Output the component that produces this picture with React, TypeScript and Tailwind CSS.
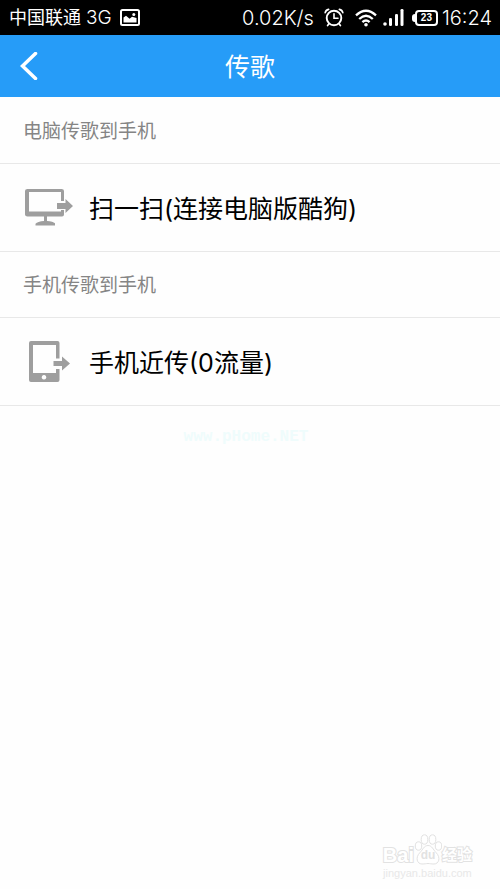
import type { ReactNode } from 'react';

const StatusBar = () => (
  <div className="flex h-[35px] items-center justify-between bg-black pl-[9px] pr-2 text-lg text-white">
    <div className="flex items-center gap-2">
      <span>
        中国联通 <span className="text-[19px] font-light">3G</span>
      </span>
      <svg viewBox="0 0 20 17" className="h-[17px] w-5" fill="none">
        <rect x="1" y="1" width="18" height="15" rx="1.5" stroke="#fff" strokeWidth="2" />
        <path d="M3.5 13.5V8.5L6 6.8l3.600 3 2.400-2L16.500 9v4.500z" fill="#fff" />
        <circle cx="13.8" cy="5.4" r="1.5" fill="#fff" />
      </svg>
    </div>
    <div className="flex items-center">
      <span className="text-xl font-light">0.02K/s</span>
      <svg viewBox="0 0 20 19" className="ml-[10px] h-[19px] w-5" fill="none" stroke="#fff" strokeLinecap="round">
        <circle cx="10" cy="10" r="7.3" strokeWidth="1.9" />
        <path d="M10 5.8V10.3H14" strokeWidth="1.6" />
        <path d="M1.2 4.6Q1.8 2 4.6 1.4M18.8 4.6Q18.2 2 15.4 1.4M4.8 16l-1.2 1.6M15.2 16l1.2 1.6" strokeWidth="1.7" />
      </svg>
      <svg viewBox="0 0 22 18" className="ml-[11px] h-[18px] w-[22px]" fill="none" stroke="#fff" strokeWidth="2.3">
        <path d="M1 6.4Q11-2.8 21 6.4" />
        <path d="M4.2 10Q11 3.6 17.8 10" />
        <path d="M7.4 13.2Q11 9.8 14.6 13.2" />
        <circle cx="11" cy="15.8" r="1.8" fill="#fff" stroke="none" />
      </svg>
      <svg viewBox="0 0 21 17" className="ml-[6px] h-[17px] w-[21px]" fill="#fff">
        <circle cx="2" cy="15" r="1.8" />
        <rect x="6" y="9" width="3" height="8" rx="1.3" />
        <rect x="12" y="5" width="3" height="12" rx="1.3" />
        <rect x="17.5" y="0" width="3" height="17" rx="1.3" />
      </svg>
      <div className="ml-2 flex items-center">
        <div className="h-2 w-[3px] rounded-l-sm bg-white" />
        <div className="flex h-4 w-[23px] items-center justify-center rounded-[4px] border-2 border-white font-['Liberation_Sans'] text-[10px] leading-none font-bold">
          23
        </div>
      </div>
      <span className="ml-1 text-xl font-light">16:24</span>
    </div>
  </div>
);

const ComputerIcon = () => (
  <svg viewBox="0 0 50 40" className="h-10 w-[50px]" fill="#9e9e9e">
    <path d="M3.5 1h34Q40 1 40 3V13h-3V4H5v19.500h32V22h3v4.500q0 2-2 2H23v4.500q6 .5 8 2.200V37.500H11.500v-1.800q2-2.200 8.500-2.700V28.500H3.500Q1 28.500 1 26.500V3Q1 1 3.500 1z" />
    <path d="M33 15h8.500V11l7.500 7-7.500 7v-4h-8.500z" />
  </svg>
);

const PhoneIcon = () => (
  <svg viewBox="0 0 50 42" className="h-[42px] w-[50px]" fill="#9e9e9e">
    <path
      fillRule="evenodd"
      d="M7 0h26.500q2 0 2 2v15.500h-3.500V4H9v28h23v-4h3.500v11q0 2-2 2H7q-2 0-2-2V2q0-2 2-2zM20 34a2.300 2.300 0 1 0 .01 0z"
    />
    <path d="M29.500 20h8.500v-4.500l8 7-8 7V25h-8.500z" />
  </svg>
);

const SectionTitle = ({ children }: { children: ReactNode }) => (
  <h2 className="flex h-[66px] items-center border-b border-[#e8e8e8] px-[23px] pt-1 text-[19px] text-[#858585]">
    {children}
  </h2>
);

const MenuItem = ({ icon, label }: { icon: ReactNode; label: string }) => (
  <button
    type="button"
    className="flex h-[88px] w-full items-center gap-[15px] border-b border-[#e8e8e8] px-6 text-left text-[25px] text-black"
  >
    {icon}
    <span className="pt-1">{label}</span>
  </button>
);

const BaiduMark = () => (
  <div className="flex flex-col items-center text-[#e2e2e2]">
    <div className="flex h-[31px] items-end">
      <span className="font-['Liberation_Sans'] text-xl leading-5 font-bold text-white [-webkit-text-stroke:2px_#e2e2e2] [paint-order:stroke_fill]">
        Bai
      </span>
      <div className="relative h-[31px] w-7">
        <svg viewBox="0 0 28 31" className="h-[31px] w-7" fill="#fff" stroke="#e2e2e2">
          <ellipse cx="4.500" cy="12" rx="3.200" ry="4.200" />
          <ellipse cx="10.500" cy="5.500" rx="3.300" ry="4.700" />
          <ellipse cx="18.500" cy="5.500" rx="3.300" ry="4.700" />
          <ellipse cx="24.500" cy="12" rx="3.200" ry="4.200" />
          <path d="M14 11.500c4 0 5 4 8 7 5 5 3 11.500-2 11.500-3 0-4-.5-6-.5s-3 .5-6 .5c-5 0-7-6.500-2-11.500 3-3 4-7 8-7z" />
        </svg>
        <span className="absolute inset-x-0 bottom-1 text-center font-['Liberation_Sans'] text-xs leading-3 font-bold">
          du
        </span>
      </div>
      <span className="text-[15px] leading-5 font-bold text-white [-webkit-text-stroke:2px_#e2e2e2] [paint-order:stroke_fill]">
        经验
      </span>
    </div>
    <span className="font-['Liberation_Sans'] text-[11px] leading-4 text-[#e8e8e8]">jingyan.baidu.com</span>
  </div>
);

const App = () => {
  return (
    <div className="flex min-h-screen flex-col bg-[#fefefe] font-['Inter','Noto_Sans_CJK_SC',sans-serif]">
      <StatusBar />
      <header className="grid h-[62px] grid-cols-[64px_1fr_64px] items-center bg-[#269cf8] text-white">
        <button type="button" aria-label="返回" className="flex h-full items-center pl-5">
          <svg viewBox="0 0 18 28" className="h-7 w-[18px]" fill="none" stroke="#fff" strokeWidth="3.500">
            <path d="M15.500 1.500L2.500 14l13 12.500" strokeLinecap="round" />
          </svg>
        </button>
        <h1 className="pt-1 text-center text-[25px]">传歌</h1>
      </header>
      <main className="flex-1 pt-px">
        <SectionTitle>电脑传歌到手机</SectionTitle>
        <MenuItem icon={<ComputerIcon />} label="扫一扫(连接电脑版酷狗)" />
        <SectionTitle>手机传歌到手机</SectionTitle>
        <MenuItem icon={<PhoneIcon />} label="手机近传(0流量)" />
        <p className="mt-[19px] pr-2 text-center font-['Liberation_Mono'] text-base font-bold text-[#effcfc]">
          www.pHome.NET
        </p>
      </main>
      <footer className="flex justify-end pr-7 pb-2">
        <BaiduMark />
      </footer>
    </div>
  );
};

export default App;
